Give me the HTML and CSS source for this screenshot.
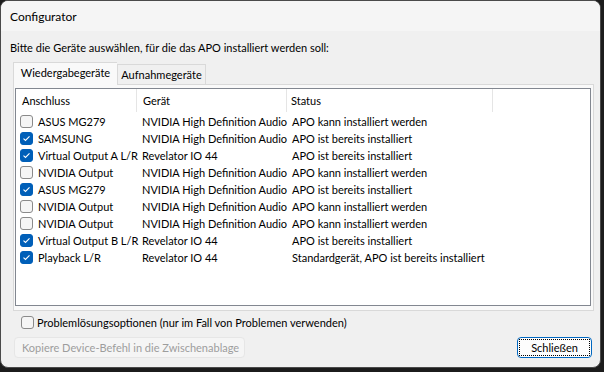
FILE: index.html
```html
<!DOCTYPE html>
<html lang="de">
<head>
  <meta charset="UTF-8" />
  <title>Configurator</title>
  <link rel="stylesheet" href="styles.css">
</head>
<body>
  <div class="window">
    <div class="titlebar">Configurator</div>

    <div class="content">
      <p class="intro">Bitte die Geräte auswählen, für die das APO installiert werden soll:</p>

      <div class="tabs">
        <div class="tab active">Wiedergabegeräte</div>
        <div class="tab">Aufnahmegeräte</div>
      </div>

      <div class="panel">
        <div class="list">
          <div class="list-head">
            <div class="hcell">Anschluss</div>
            <div class="hcell">Gerät</div>
            <div class="hcell">Status</div>
            <div class="hcell last"></div>
          </div>

          <div class="row">
            <div class="cell first"><span class="check"></span>ASUS MG279</div>
            <div class="cell">NVIDIA High Definition Audio</div>
            <div class="cell">APO kann installiert werden</div>
          </div>
          <div class="row">
            <div class="cell first"><span class="check on"></span>SAMSUNG</div>
            <div class="cell">NVIDIA High Definition Audio</div>
            <div class="cell">APO ist bereits installiert</div>
          </div>
          <div class="row">
            <div class="cell first"><span class="check on"></span>Virtual Output A L/R</div>
            <div class="cell">Revelator IO 44</div>
            <div class="cell">APO ist bereits installiert</div>
          </div>
          <div class="row">
            <div class="cell first"><span class="check"></span>NVIDIA Output</div>
            <div class="cell">NVIDIA High Definition Audio</div>
            <div class="cell">APO kann installiert werden</div>
          </div>
          <div class="row">
            <div class="cell first"><span class="check on"></span>ASUS MG279</div>
            <div class="cell">NVIDIA High Definition Audio</div>
            <div class="cell">APO ist bereits installiert</div>
          </div>
          <div class="row">
            <div class="cell first"><span class="check"></span>NVIDIA Output</div>
            <div class="cell">NVIDIA High Definition Audio</div>
            <div class="cell">APO kann installiert werden</div>
          </div>
          <div class="row">
            <div class="cell first"><span class="check"></span>NVIDIA Output</div>
            <div class="cell">NVIDIA High Definition Audio</div>
            <div class="cell">APO kann installiert werden</div>
          </div>
          <div class="row">
            <div class="cell first"><span class="check on"></span>Virtual Output B L/R</div>
            <div class="cell">Revelator IO 44</div>
            <div class="cell">APO ist bereits installiert</div>
          </div>
          <div class="row">
            <div class="cell first"><span class="check on"></span>Playback L/R</div>
            <div class="cell">Revelator IO 44</div>
            <div class="cell">Standardgerät, APO ist bereits installiert</div>
          </div>
        </div>
      </div>

      <label class="option"><span class="check"></span>Problemlösungsoptionen (nur im Fall von Problemen verwenden)</label>

      <div class="buttons">
        <button class="btn disabled" disabled>Kopiere Device-Befehl in die Zwischenablage</button>
        <button class="btn primary"><span class="focus">Schließen</span></button>
      </div>
    </div>
  </div>
</body>
</html>
```

FILE: styles.css
```css
* {
  box-sizing: border-box;
  margin: 0;
  padding: 0;
}

body {
  font-family: 'Lato', 'Noto Sans', sans-serif;
  font-size: 11px;
  color: #000;
  background: #1c1c1c;
  width: 604px;
  height: 372px;
  overflow: hidden;
}

.window {
  width: 601px;
  height: 368px;
  background: #f0f0f0;
  border: 1px solid #4a4a4a;
  border-radius: 8px;
  overflow: hidden;
  display: flex;
  flex-direction: column;
}

.titlebar {
  height: 30px;
  background: #f5f5f5;
  padding-left: 9px;
  display: flex;
  align-items: center;
  line-height: 15px;
  font-size: 12px;
}

.content {
  padding: 9px 7px 0 9px;
  display: flex;
  flex-direction: column;
}

.intro {
  line-height: 15px;
  height: 15px;
  white-space: nowrap;
}

/* tabs */
.tabs {
  display: flex;
  align-items: flex-end;
  margin-top: 7px;
  padding-left: 3px;
  height: 22px;
  position: relative;
  z-index: 1;
}

.tab {
  width: 89px;
  height: 20px;
  line-height: 19px;
  text-align: center;
  white-space: nowrap;
  border: 1px solid #d9d9d9;
  border-bottom: none;
  background: #f0f0f0;
}

.tab.active {
  width: 104px;
  height: 23px;
  margin-bottom: -1px;
  background: #f9f9f9;
  line-height: 20px;
  border-right: none;
}

.panel {
  margin-left: 3px;
  width: 581px;
  height: 227px;
  border: 1px solid #d9d9d9;
  background: #f9f9f9;
  padding: 3px 2px 4px 1px;
}

/* list view */
.list {
  height: 100%;
  background: #fff;
  border: 1px solid #828790;
}

.list-head,
.row {
  display: grid;
  grid-template-columns: 121px 150px 206px 1fr;
}

.list-head {
  height: 24px;
}

.hcell {
  padding-left: 6px;
  line-height: 23px;
  border-right: 1px solid #e5e5e5;
  height: 23px;
}

.hcell:nth-child(3) {
  padding-left: 4px;
}

.hcell.last {
  border-right: none;
}

.row {
  height: 17px;
  line-height: 17px;
}

.cell {
  white-space: nowrap;
  padding-left: 5px;
}

.cell.first {
  display: flex;
  align-items: center;
  padding-left: 4px;
  gap: 5px;
}

/* checkboxes */
.check {
  width: 13px;
  height: 13px;
  flex: none;
  border: 1px solid #8a8a8a;
  border-radius: 3px;
  background: #f5f5f5;
  display: inline-block;
}

.check.on {
  border-color: #005fb8;
  background: #005fb8 url("data:image/svg+xml;utf8,<svg xmlns='http://www.w3.org/2000/svg' width='11' height='11' viewBox='0 0 11 11'><path d='M2.5 5.6 L4.5 7.5 L8.5 3.4' fill='none' stroke='white' stroke-width='1.1'/></svg>") no-repeat center;
}

.option {
  display: flex;
  align-items: center;
  gap: 3px;
  margin: 4px 0 0 11px;
  height: 15px;
  line-height: 15px;
  white-space: nowrap;
}

/* buttons */
.buttons {
  display: flex;
  justify-content: space-between;
  align-items: center;
  margin-top: 7px;
  padding-left: 4px;
  padding-right: 1px;
}

.btn {
  font-family: inherit;
  font-size: 11px;
  height: 21px;
  border-radius: 4px;
  background: #fdfdfd;
  color: #000;
  white-space: nowrap;
}

.btn.disabled {
  width: 231px;
  color: #9d9d9d;
  background: #f5f5f5;
  border: 1px solid #e6e6e6;
  text-align: left;
  padding-left: 7px;
}

.btn.primary {
  width: 75px;
  border: 1px solid #0067c0;
  padding: 1px;
  display: flex;
}

.focus {
  flex: 1;
  border: 1px dotted #000;
  line-height: 15px;
  text-align: center;
}
```
